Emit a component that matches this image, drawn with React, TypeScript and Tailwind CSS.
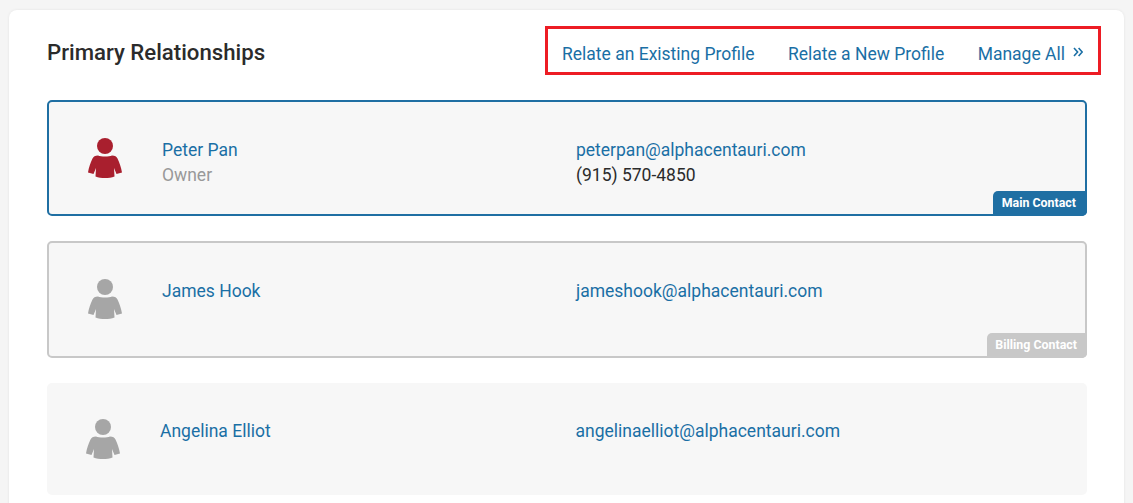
import React from 'react';

function PersonIcon({ className }: { className: string }) {
    return (
        <svg viewBox="0 0 34 40" className={`w-[34px] h-[40px] ${className}`} fill="currentColor">
            <circle cx="17" cy="8" r="8" />
            <path d="M10 17.5 C7 17.5 5.5 18.5 4.5 20.5 C2.5 24.5 0.8 29.5 0 34.5 L5.5 36 L8 30 L7.5 38.5 C13 40.5 21 40.5 26.5 38.5 L26 30 L28.5 36 L34 34.5 C33.2 29.5 31.5 24.5 29.5 20.5 C28.5 18.5 27 17.5 24 17.5 C21 18.8 13 18.8 10 17.5 Z" />
        </svg>
    );
}

function DoubleChevron() {
    return (
        <svg viewBox="0 0 10 10" className="-mt-[5px] h-[10px] w-[10px]" fill="none" stroke="currentColor" strokeWidth="1.6">
            <path d="M1 1 L4.6 5 L1 9" />
            <path d="M5.6 1 L9.2 5 L5.6 9" />
        </svg>
    );
}

interface ContactProps {
    name: string;
    email: string;
    role?: string;
    phone?: string;
    badge?: string;
    variant: 'main' | 'billing' | 'plain';
    iconIndent: string;
    nameWidth: string;
    textOffset: string;
    height: string;
}

function ContactCard({ name, email, role, phone, badge, variant, iconIndent, nameWidth, textOffset, height }: ContactProps) {
    const border =
        variant === 'main'
            ? 'border-2 border-[#1f6fa3]'
            : variant === 'billing'
              ? 'border-2 border-[#c8c8c8]'
              : 'border-2 border-transparent';
    return (
        <div className={`relative flex rounded-[5px] bg-[#f7f7f7] pt-[34px] ${border} ${height}`}>
            <div className={`shrink-0 pr-[39px] ${iconIndent}`}>
                <PersonIcon className={variant === 'plain' ? 'text-[#a6a6a6]' : variant === 'main' ? 'text-[#a91f2e] mt-[2px]' : 'text-[#a6a6a6] mt-[2px]'} />
            </div>
            <div className={`shrink-0 pl-[1px] ${nameWidth} ${textOffset}`}>
                <div className="text-[17.5px] leading-[25px] text-[#1a6fa5]">{name}</div>
                {role && <div className="text-[17.5px] leading-[25px] text-[#999999]">{role}</div>}
            </div>
            <div className={textOffset}>
                <div className="text-[17.5px] leading-[25px] text-[#1a6fa5]">{email}</div>
                {phone && <div className="text-[17.5px] leading-[25px] text-[#2b2b2b]">{phone}</div>}
            </div>
            {badge && (
                <div
                    className={`absolute -right-[2px] -bottom-[2px] h-[25px] rounded-tl-[5px] rounded-br-[5px] text-[12.4px] font-bold leading-[24px] text-white ${
                        variant === 'main' ? 'bg-[#1f6fa3] pl-[9px] pr-[11px]' : 'bg-[#c8c8c8] pl-[8px] pr-[10px]'
                    }`}
                >
                    {badge}
                </div>
            )}
        </div>
    );
}

export default function App() {
    return (
        <div className="h-[503px] overflow-hidden bg-[#f5f5f5] pl-[9px] pr-[9px] pt-[10px] font-['Roboto',sans-serif]">
            <div className="h-[520px] rounded-[8px] bg-white pl-[38px] pr-[37px] pt-[16px] shadow-[0_0_3px_rgba(0,0,0,0.08)]">
                <div className="flex h-[74px] items-start justify-between">
                    <h2 className="pt-[11px] text-[22.2px] font-medium leading-[30px] text-[#2b2b2b]">Primary Relationships</h2>
                    <div className="-mr-[14px] flex h-[49px] w-[556px] items-center justify-between border-[3px] border-[#ed1c24] pl-[14px] pr-[15px] pt-[7px] text-[17.5px] text-[#1a6fa5]">
                        <span>Relate an Existing Profile</span>
                        <span>Relate a New Profile</span>
                        <span className="flex items-center gap-[8px]">
                            Manage All
                            <DoubleChevron />
                        </span>
                    </div>
                </div>
                <div className="flex flex-col gap-[25px]">
                    <ContactCard
                        variant="main"
                        name="Peter Pan"
                        role="Owner"
                        email="peterpan@alphacentauri.com"
                        phone="(915) 570-4850"
                        badge="Main Contact"
                        iconIndent="pl-[39px]"
                        nameWidth="w-[415px]"
                        textOffset="mt-[2px]"
                        height="h-[116px]"
                    />
                    <ContactCard
                        variant="billing"
                        name="James Hook"
                        email="jameshook@alphacentauri.com"
                        badge="Billing Contact"
                        iconIndent="pl-[39px]"
                        nameWidth="w-[415px]"
                        textOffset="mt-[2px]"
                        height="h-[117px]"
                    />
                    <ContactCard
                        variant="plain"
                        name="Angelina Elliot"
                        email="angelinaelliot@alphacentauri.com"
                        iconIndent="pl-[37px]"
                        nameWidth="w-[416.5px]"
                        textOffset="mt-0"
                        height="h-[112px]"
                    />
                </div>
            </div>
        </div>
    );
}
